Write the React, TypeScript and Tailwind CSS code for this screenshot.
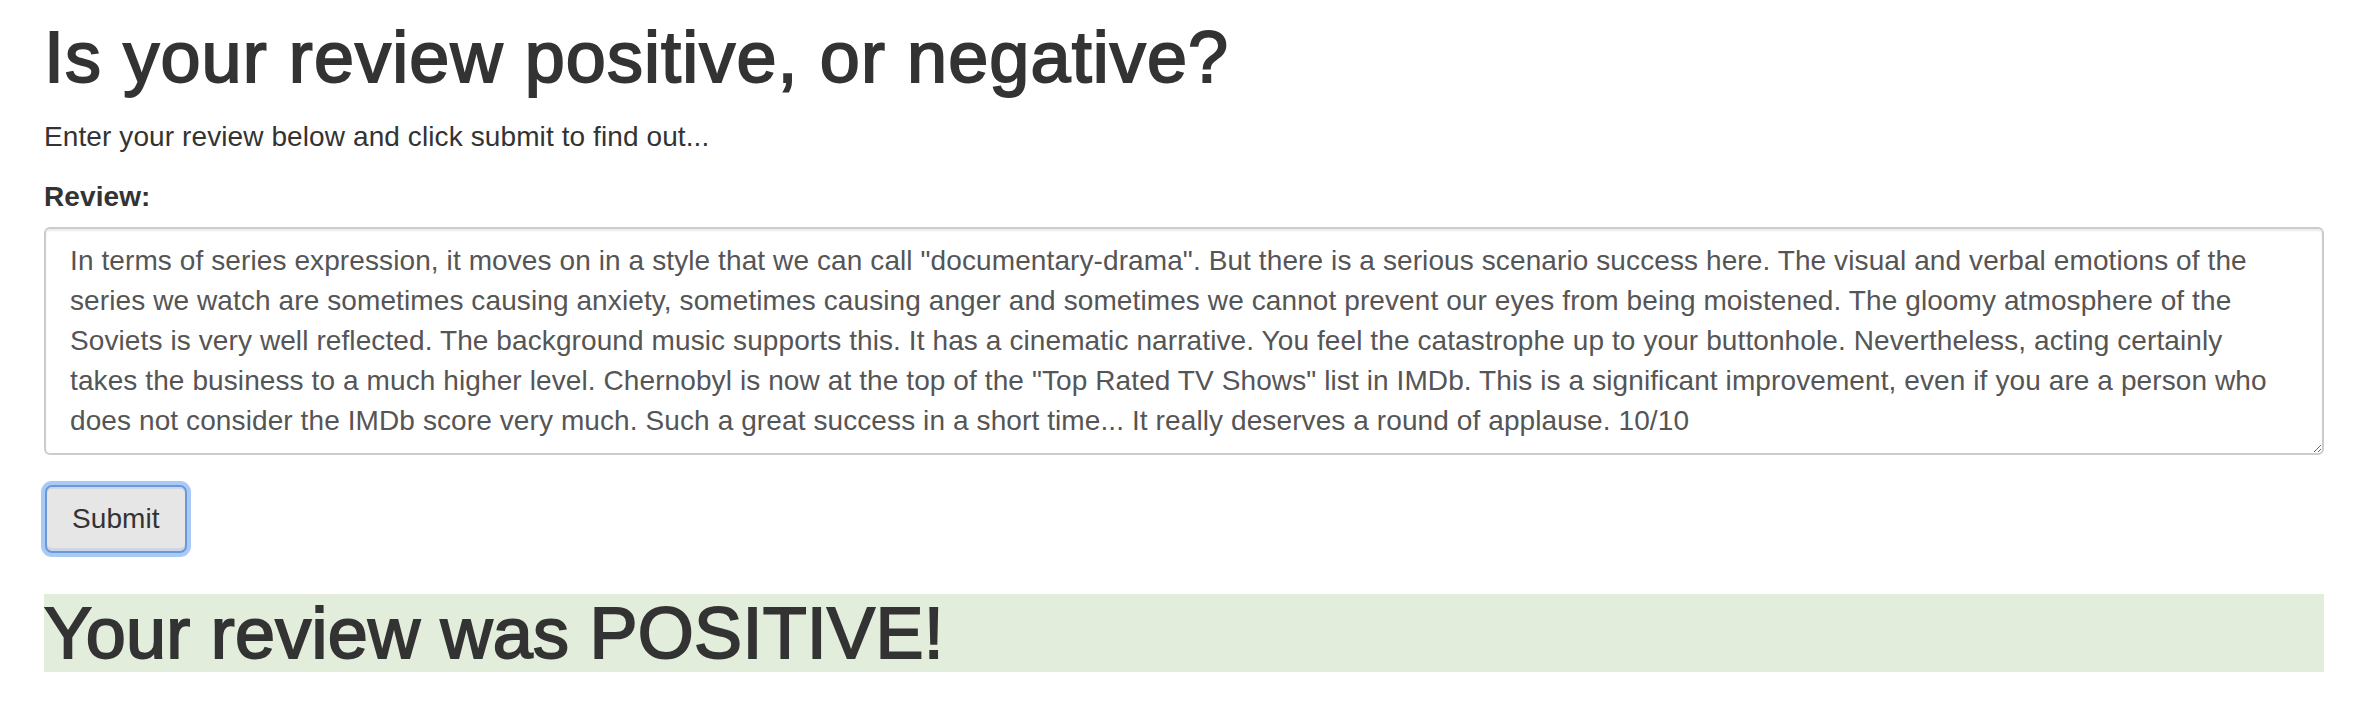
import React from 'react';

const review = [
  'In terms of series expression, it moves on in a style that we can call "documentary-drama". But there is a serious scenario success here. The visual and verbal emotions of the',
  'series we watch are sometimes causing anxiety, sometimes causing anger and sometimes we cannot prevent our eyes from being moistened. The gloomy atmosphere of the',
  'Soviets is very well reflected. The background music supports this. It has a cinematic narrative. You feel the catastrophe up to your buttonhole. Nevertheless, acting certainly',
  'takes the business to a much higher level. Chernobyl is now at the top of the "Top Rated TV Shows" list in IMDb. This is a significant improvement, even if you are a person who',
  'does not consider the IMDb score very much. Such a great success in a short time... It really deserves a round of applause. 10/10',
].join('\n');

export default function App() {
  return (
    <div className="min-h-[726px] bg-white pl-[44px] pr-[36px] font-['Liberation_Sans',Arial,sans-serif] text-[28px] leading-[40px] tracking-[0.1px] text-[#333]">
      {/* Title */}
      <h1 className="mt-[18px] mb-[20px] text-[72px] leading-[79px] font-normal tracking-[1.1px] [-webkit-text-stroke:1.9px_#333]">
        Is your review positive, or negative?
      </h1>
      <p className="mb-[20px]">Enter your review below and click submit to find out...</p>

      <form onSubmit={(e) => e.preventDefault()}>
        <div className="mb-[30px]">
          <label htmlFor="review" className="mb-[10px] block font-bold">
            Review:
          </label>
          <textarea
            id="review"
            rows={5}
            defaultValue={review}
            className="block w-full rounded-[6px] border-2 border-[#ccc] bg-white px-[24px] py-[12px] text-[28px] leading-[40px] tracking-[0.1px] text-[#555] shadow-[inset_0_2px_2px_rgba(0,0,0,0.075)] outline-none"
          />
        </div>
        <button
          type="submit"
          className="ml-px h-[68px] rounded-[7px] border-2 border-[#6c98d6] bg-[#e6e6e6] px-[25px] text-[28px] leading-[40px] text-[#333] shadow-[0_0_0_4px_#a9c9f6,inset_0_2px_0_#cdd6e6,inset_0_-3px_0_#cdd6e6]"
        >
          Submit
        </button>
      </form>

      {/* Result */}
      <h1 className="mt-[41px] bg-[#e2eedb] text-[72px] leading-[78px] font-normal tracking-[0.25px] [-webkit-text-stroke:1.9px_#333]">
        Your review was POSITIVE!
      </h1>
    </div>
  );
}
